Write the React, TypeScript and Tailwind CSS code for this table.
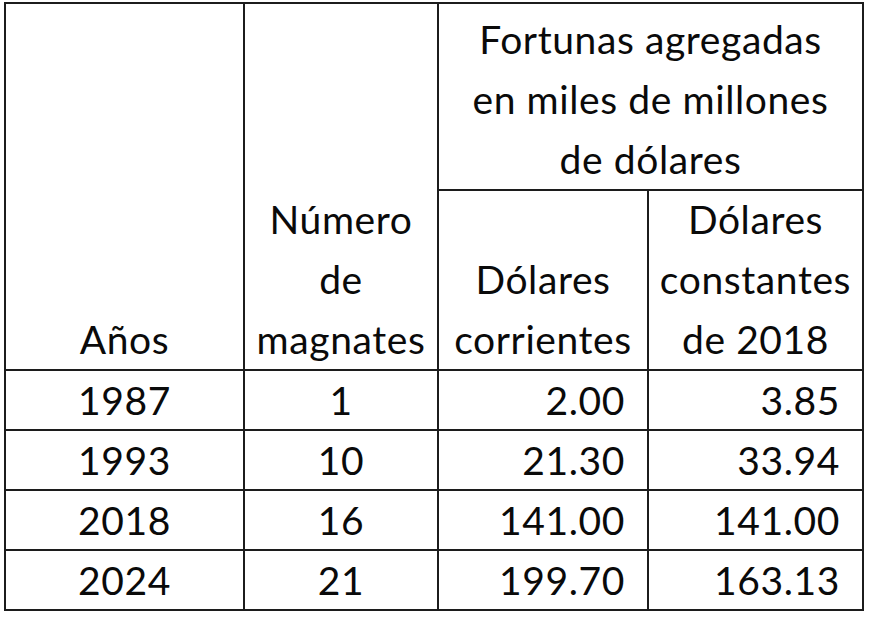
const rows = [
  { year: "1987", count: "1", current: "2.00", constant: "3.85" },
  { year: "1993", count: "10", current: "21.30", constant: "33.94" },
  { year: "2018", count: "16", current: "141.00", constant: "141.00" },
  { year: "2024", count: "21", current: "199.70", constant: "163.13" },
]

export default function App() {
  return (
    <div className="min-h-screen bg-white pl-[4px] pt-[2px] font-['Lato','Liberation_Sans',sans-serif] text-[39px] leading-[60px] tracking-[0.6px] text-[#0a0a0a]">
      <div className="grid w-fit grid-cols-[237px_192px_208px_213px] grid-rows-[185px_178px_58px_58px_58px_58px] gap-[2px] bg-[#1c1c1c] p-[2px]">
        <div className="row-span-2 flex items-end justify-center bg-white">Años</div>
        <div className="row-span-2 flex flex-col items-center justify-end bg-white text-center">
          <span>Número</span>
          <span>de</span>
          <span>magnates</span>
        </div>
        <div className="col-span-2 flex flex-col items-center justify-end bg-white text-center">
          <span>Fortunas agregadas</span>
          <span>en miles de millones</span>
          <span>de dólares</span>
        </div>
        <div className="flex flex-col items-center justify-end bg-white text-center">
          <span>Dólares</span>
          <span>corrientes</span>
        </div>
        <div className="flex flex-col items-center justify-end bg-white text-center">
          <span>Dólares</span>
          <span>constantes</span>
          <span>de 2018</span>
        </div>

        {rows.map((r) => (
          <div key={r.year} className="contents">
            <div className="flex items-center justify-center bg-white">{r.year}</div>
            <div className="flex items-center justify-center bg-white">{r.count}</div>
            <div className="flex items-center justify-end bg-white pr-[22px]">{r.current}</div>
            <div className="flex items-center justify-end bg-white pr-[22px]">{r.constant}</div>
          </div>
        ))}
      </div>
    </div>
  )
}
